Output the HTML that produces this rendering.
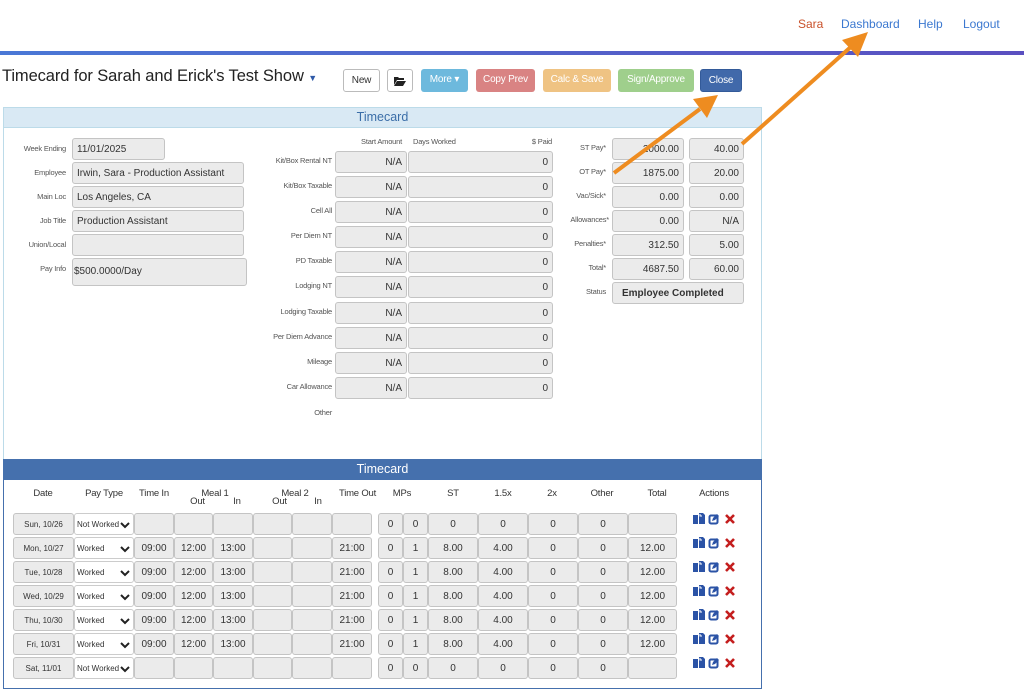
<!DOCTYPE html>
<html><head><meta charset="utf-8"><style>
*{box-sizing:border-box}
body{margin:0;width:1024px;height:684px;overflow:hidden;background:#fff;font-family:"Liberation Sans",sans-serif;color:#333;position:relative}
.a{position:absolute;white-space:nowrap}
.nav{font-size:12px;top:17px;color:#3b78d0}
.btn{position:absolute;top:69px;height:23px;border-radius:3px;font-size:10px;color:#fff;text-align:center;line-height:22px;letter-spacing:-0.2px}
.i{position:absolute;background:#ebebeb;border:1px solid #c4c4c4;border-radius:3px;font-size:10px;line-height:22px;padding:0 4px;height:22px;white-space:nowrap;overflow:hidden;color:#333}
.r{text-align:right}
.c{text-align:center;padding:0}
.l{position:absolute;font-size:7.5px;color:#555;text-align:right;white-space:nowrap;letter-spacing:-0.2px}
.h{position:absolute;font-size:9.5px;color:#333;text-align:center;white-space:nowrap;letter-spacing:-0.2px}
.sel{background:#fff;border:1px solid #ccc;font-size:8px;padding:0 2px}
.sel svg{position:absolute;right:3px;top:8px}
</style></head><body>
<svg width="0" height="0" style="position:absolute"><defs>
<g id="ic"><path d="M0 2h5v9H0z M6 0h4l2 2v9H6z" fill="#2b53a6"/><path d="M7 1v2h2" stroke="#fff" stroke-width="1" fill="none"/>
<rect x="16.5" y="2.5" width="8" height="8" rx="1.5" fill="none" stroke="#2b53a6" stroke-width="2"/><path d="M19 8l1-3 4-4 2 2-4 4z" fill="#2b53a6"/>
<path d="M33 2l8 8M41 2l-8 8" stroke="#c41e1e" stroke-width="2.6"/></g>
<path id="chev" d="M1 1l4 4 4-4" stroke="#222" stroke-width="2" fill="none"/></defs></svg>

<div class="a nav" style="left:798px;color:#c9512a">Sara</div>
<div class="a nav" style="left:841px">Dashboard</div>
<div class="a nav" style="left:918px">Help</div>
<div class="a nav" style="left:963px">Logout</div>
<div class="a" style="left:0;top:51px;width:1024px;height:4px;background:linear-gradient(90deg,#4a78d6,#5a4fc0)"></div>
<div class="a" style="left:2px;top:67px;font-size:16.5px;color:#222;letter-spacing:-0.1px">Timecard for Sarah and Erick's Test Show <span style="font-size:9px;color:#2f5aa8">▼</span></div>
<div class="btn" style="left:343px;width:37px;background:#fff;border:1px solid #bbb;color:#333">New</div>
<div class="btn" style="left:387px;width:26px;background:#fff;border:1px solid #bbb;color:#222"><svg width="12" height="10" viewBox="0 0 12 10" style="margin-top:6px"><path d="M0 1h4l1 1h5v2H3L0 9z M3 5h9l-3 5H0z" fill="#222"/></svg></div>
<div class="btn" style="left:421px;width:47px;background:#6db9dd">More ▾</div>
<div class="btn" style="left:476px;width:59px;background:#d98383">Copy Prev</div>
<div class="btn" style="left:543px;width:68px;background:#efc383">Calc &amp; Save</div>
<div class="btn" style="left:618px;width:76px;background:#9fcf8c">Sign/Approve</div>
<div class="btn" style="left:700px;width:42px;background:#4169aa;border:1px solid #335a99">Close</div>

<div class="a" style="left:3px;top:107px;width:759px;height:352px;border:1px solid #bcdbe9;border-bottom:none"></div>
<div class="a" style="left:3px;top:107px;width:759px;height:21px;background:#d9e9f4;border:1px solid #bcdbe9;color:#3b6ea8;font-size:12.5px;text-align:center;line-height:19px">Timecard</div>

<div class="l" style="left:0;width:66px;top:144px">Week Ending</div><div class="i" style="left:72px;top:138px;width:93px">11/01/2025</div>
<div class="l" style="left:0;width:66px;top:168px">Employee</div><div class="i" style="left:72px;top:162px;width:172px">Irwin, Sara - Production Assistant</div>
<div class="l" style="left:0;width:66px;top:192px">Main Loc</div><div class="i" style="left:72px;top:186px;width:172px">Los Angeles, CA</div>
<div class="l" style="left:0;width:66px;top:216px">Job Title</div><div class="i" style="left:72px;top:210px;width:172px">Production Assistant</div>
<div class="l" style="left:0;width:66px;top:240px">Union/Local</div><div class="i" style="left:72px;top:234px;width:172px"></div>
<div class="l" style="left:0;width:66px;top:264px">Pay Info</div><div class="i" style="left:72px;top:258px;width:175px;height:28px;line-height:26px;padding-left:1px">$500.0000/Day</div>

<div class="l" style="left:330px;width:72px;top:137px">Start Amount</div>
<div class="l" style="left:413px;top:137px;text-align:left">Days Worked</div>
<div class="l" style="left:500px;width:52px;top:137px">$ Paid</div>

<div class="l" style="left:240px;width:92px;top:156px">Kit/Box Rental NT</div><div class="i r" style="left:335px;top:151px;width:72px">N/A</div><div class="i r" style="left:408px;top:151px;width:145px">0</div>
<div class="l" style="left:240px;width:92px;top:181px">Kit/Box Taxable</div><div class="i r" style="left:335px;top:176px;width:72px">N/A</div><div class="i r" style="left:408px;top:176px;width:145px">0</div>
<div class="l" style="left:240px;width:92px;top:206px">Cell All</div><div class="i r" style="left:335px;top:201px;width:72px">N/A</div><div class="i r" style="left:408px;top:201px;width:145px">0</div>
<div class="l" style="left:240px;width:92px;top:231px">Per Diem NT</div><div class="i r" style="left:335px;top:226px;width:72px">N/A</div><div class="i r" style="left:408px;top:226px;width:145px">0</div>
<div class="l" style="left:240px;width:92px;top:256px">PD Taxable</div><div class="i r" style="left:335px;top:251px;width:72px">N/A</div><div class="i r" style="left:408px;top:251px;width:145px">0</div>
<div class="l" style="left:240px;width:92px;top:281px">Lodging NT</div><div class="i r" style="left:335px;top:276px;width:72px">N/A</div><div class="i r" style="left:408px;top:276px;width:145px">0</div>
<div class="l" style="left:240px;width:92px;top:307px">Lodging Taxable</div><div class="i r" style="left:335px;top:302px;width:72px">N/A</div><div class="i r" style="left:408px;top:302px;width:145px">0</div>
<div class="l" style="left:240px;width:92px;top:332px">Per Diem Advance</div><div class="i r" style="left:335px;top:327px;width:72px">N/A</div><div class="i r" style="left:408px;top:327px;width:145px">0</div>
<div class="l" style="left:240px;width:92px;top:357px">Mileage</div><div class="i r" style="left:335px;top:352px;width:72px">N/A</div><div class="i r" style="left:408px;top:352px;width:145px">0</div>
<div class="l" style="left:240px;width:92px;top:382px">Car Allowance</div><div class="i r" style="left:335px;top:377px;width:72px">N/A</div><div class="i r" style="left:408px;top:377px;width:145px">0</div>
<div class="l" style="left:240px;width:92px;top:408px">Other</div>

<div class="l" style="left:540px;width:66px;top:143px">ST Pay*</div><div class="i r" style="left:612px;top:138px;width:72px">2000.00</div><div class="i r" style="left:689px;top:138px;width:55px">40.00</div>
<div class="l" style="left:540px;width:66px;top:167px">OT Pay*</div><div class="i r" style="left:612px;top:162px;width:72px">1875.00</div><div class="i r" style="left:689px;top:162px;width:55px">20.00</div>
<div class="l" style="left:540px;width:66px;top:191px">Vac/Sick*</div><div class="i r" style="left:612px;top:186px;width:72px">0.00</div><div class="i r" style="left:689px;top:186px;width:55px">0.00</div>
<div class="l" style="left:540px;width:69px;top:215px">Allowances*</div><div class="i r" style="left:612px;top:210px;width:72px">0.00</div><div class="i r" style="left:689px;top:210px;width:55px">N/A</div>
<div class="l" style="left:540px;width:66px;top:239px">Penalties*</div><div class="i r" style="left:612px;top:234px;width:72px">312.50</div><div class="i r" style="left:689px;top:234px;width:55px">5.00</div>
<div class="l" style="left:540px;width:66px;top:263px">Total*</div><div class="i r" style="left:612px;top:258px;width:72px">4687.50</div><div class="i r" style="left:689px;top:258px;width:55px">60.00</div>
<div class="l" style="left:540px;width:66px;top:287px">Status</div><div class="i" style="left:612px;top:282px;width:132px;font-weight:bold;padding-left:9px">Employee Completed</div>

<div class="a" style="left:3px;top:459px;width:759px;height:230px;border:1px solid #4570ad"></div>
<div class="a" style="left:3px;top:459px;width:759px;height:21px;background:#4570ad;color:#fff;font-size:12.5px;text-align:center;line-height:20px">Timecard</div>

<div class="h" style="left:13px;width:60px;top:488px">Date</div>
<div class="h" style="left:74px;width:60px;top:488px">Pay Type</div>
<div class="h" style="left:134px;width:40px;top:488px">Time In</div>
<div class="h" style="left:185px;width:60px;top:488px">Meal 1</div>
<div class="h" style="left:180px;width:35px;top:496px">Out</div><div class="h" style="left:222px;width:30px;top:496px">In</div>
<div class="h" style="left:265px;width:60px;top:488px">Meal 2</div>
<div class="h" style="left:262px;width:35px;top:496px">Out</div><div class="h" style="left:303px;width:30px;top:496px">In</div>
<div class="h" style="left:332px;width:51px;top:488px">Time Out</div>
<div class="h" style="left:378px;width:48px;top:488px">MPs</div>
<div class="h" style="left:429px;width:48px;top:488px">ST</div>
<div class="h" style="left:479px;width:48px;top:488px">1.5x</div>
<div class="h" style="left:528px;width:48px;top:488px">2x</div>
<div class="h" style="left:578px;width:48px;top:488px">Other</div>
<div class="h" style="left:628px;width:58px;top:488px">Total</div>
<div class="h" style="left:690px;width:48px;top:488px">Actions</div>

<div class="i c" style="left:13px;top:513px;width:61px;font-size:8px">Sun, 10/26</div><div class="i sel" style="left:74px;top:513px;width:60px">Not Worked<svg width="10" height="7"><use href="#chev"/></svg></div><div class="i" style="left:134px;top:513px;width:40px"></div><div class="i" style="left:174px;top:513px;width:39px"></div><div class="i" style="left:213px;top:513px;width:40px"></div><div class="i" style="left:253px;top:513px;width:39px"></div><div class="i" style="left:292px;top:513px;width:40px"></div><div class="i" style="left:332px;top:513px;width:40px"></div><div class="i c" style="left:378px;top:513px;width:25px">0</div><div class="i c" style="left:403px;top:513px;width:25px">0</div><div class="i c" style="left:428px;top:513px;width:50px">0</div><div class="i c" style="left:478px;top:513px;width:50px">0</div><div class="i c" style="left:528px;top:513px;width:50px">0</div><div class="i c" style="left:578px;top:513px;width:50px">0</div><div class="i c" style="left:628px;top:513px;width:49px"></div><svg class="a" style="left:693px;top:513px" width="44" height="12"><use href="#ic"/></svg>

<div class="i c" style="left:13px;top:537px;width:61px;font-size:8px">Mon, 10/27</div><div class="i sel" style="left:74px;top:537px;width:60px">Worked<svg width="10" height="7"><use href="#chev"/></svg></div><div class="i c" style="left:134px;top:537px;width:40px">09:00</div><div class="i c" style="left:174px;top:537px;width:39px">12:00</div><div class="i c" style="left:213px;top:537px;width:40px">13:00</div><div class="i" style="left:253px;top:537px;width:39px"></div><div class="i" style="left:292px;top:537px;width:40px"></div><div class="i c" style="left:332px;top:537px;width:40px">21:00</div><div class="i c" style="left:378px;top:537px;width:25px">0</div><div class="i c" style="left:403px;top:537px;width:25px">1</div><div class="i c" style="left:428px;top:537px;width:50px">8.00</div><div class="i c" style="left:478px;top:537px;width:50px">4.00</div><div class="i c" style="left:528px;top:537px;width:50px">0</div><div class="i c" style="left:578px;top:537px;width:50px">0</div><div class="i c" style="left:628px;top:537px;width:49px">12.00</div><svg class="a" style="left:693px;top:537px" width="44" height="12"><use href="#ic"/></svg>

<div class="i c" style="left:13px;top:561px;width:61px;font-size:8px">Tue, 10/28</div><div class="i sel" style="left:74px;top:561px;width:60px">Worked<svg width="10" height="7"><use href="#chev"/></svg></div><div class="i c" style="left:134px;top:561px;width:40px">09:00</div><div class="i c" style="left:174px;top:561px;width:39px">12:00</div><div class="i c" style="left:213px;top:561px;width:40px">13:00</div><div class="i" style="left:253px;top:561px;width:39px"></div><div class="i" style="left:292px;top:561px;width:40px"></div><div class="i c" style="left:332px;top:561px;width:40px">21:00</div><div class="i c" style="left:378px;top:561px;width:25px">0</div><div class="i c" style="left:403px;top:561px;width:25px">1</div><div class="i c" style="left:428px;top:561px;width:50px">8.00</div><div class="i c" style="left:478px;top:561px;width:50px">4.00</div><div class="i c" style="left:528px;top:561px;width:50px">0</div><div class="i c" style="left:578px;top:561px;width:50px">0</div><div class="i c" style="left:628px;top:561px;width:49px">12.00</div><svg class="a" style="left:693px;top:561px" width="44" height="12"><use href="#ic"/></svg>

<div class="i c" style="left:13px;top:585px;width:61px;font-size:8px">Wed, 10/29</div><div class="i sel" style="left:74px;top:585px;width:60px">Worked<svg width="10" height="7"><use href="#chev"/></svg></div><div class="i c" style="left:134px;top:585px;width:40px">09:00</div><div class="i c" style="left:174px;top:585px;width:39px">12:00</div><div class="i c" style="left:213px;top:585px;width:40px">13:00</div><div class="i" style="left:253px;top:585px;width:39px"></div><div class="i" style="left:292px;top:585px;width:40px"></div><div class="i c" style="left:332px;top:585px;width:40px">21:00</div><div class="i c" style="left:378px;top:585px;width:25px">0</div><div class="i c" style="left:403px;top:585px;width:25px">1</div><div class="i c" style="left:428px;top:585px;width:50px">8.00</div><div class="i c" style="left:478px;top:585px;width:50px">4.00</div><div class="i c" style="left:528px;top:585px;width:50px">0</div><div class="i c" style="left:578px;top:585px;width:50px">0</div><div class="i c" style="left:628px;top:585px;width:49px">12.00</div><svg class="a" style="left:693px;top:585px" width="44" height="12"><use href="#ic"/></svg>

<div class="i c" style="left:13px;top:609px;width:61px;font-size:8px">Thu, 10/30</div><div class="i sel" style="left:74px;top:609px;width:60px">Worked<svg width="10" height="7"><use href="#chev"/></svg></div><div class="i c" style="left:134px;top:609px;width:40px">09:00</div><div class="i c" style="left:174px;top:609px;width:39px">12:00</div><div class="i c" style="left:213px;top:609px;width:40px">13:00</div><div class="i" style="left:253px;top:609px;width:39px"></div><div class="i" style="left:292px;top:609px;width:40px"></div><div class="i c" style="left:332px;top:609px;width:40px">21:00</div><div class="i c" style="left:378px;top:609px;width:25px">0</div><div class="i c" style="left:403px;top:609px;width:25px">1</div><div class="i c" style="left:428px;top:609px;width:50px">8.00</div><div class="i c" style="left:478px;top:609px;width:50px">4.00</div><div class="i c" style="left:528px;top:609px;width:50px">0</div><div class="i c" style="left:578px;top:609px;width:50px">0</div><div class="i c" style="left:628px;top:609px;width:49px">12.00</div><svg class="a" style="left:693px;top:609px" width="44" height="12"><use href="#ic"/></svg>

<div class="i c" style="left:13px;top:633px;width:61px;font-size:8px">Fri, 10/31</div><div class="i sel" style="left:74px;top:633px;width:60px">Worked<svg width="10" height="7"><use href="#chev"/></svg></div><div class="i c" style="left:134px;top:633px;width:40px">09:00</div><div class="i c" style="left:174px;top:633px;width:39px">12:00</div><div class="i c" style="left:213px;top:633px;width:40px">13:00</div><div class="i" style="left:253px;top:633px;width:39px"></div><div class="i" style="left:292px;top:633px;width:40px"></div><div class="i c" style="left:332px;top:633px;width:40px">21:00</div><div class="i c" style="left:378px;top:633px;width:25px">0</div><div class="i c" style="left:403px;top:633px;width:25px">1</div><div class="i c" style="left:428px;top:633px;width:50px">8.00</div><div class="i c" style="left:478px;top:633px;width:50px">4.00</div><div class="i c" style="left:528px;top:633px;width:50px">0</div><div class="i c" style="left:578px;top:633px;width:50px">0</div><div class="i c" style="left:628px;top:633px;width:49px">12.00</div><svg class="a" style="left:693px;top:633px" width="44" height="12"><use href="#ic"/></svg>

<div class="i c" style="left:13px;top:657px;width:61px;font-size:8px">Sat, 11/01</div><div class="i sel" style="left:74px;top:657px;width:60px">Not Worked<svg width="10" height="7"><use href="#chev"/></svg></div><div class="i" style="left:134px;top:657px;width:40px"></div><div class="i" style="left:174px;top:657px;width:39px"></div><div class="i" style="left:213px;top:657px;width:40px"></div><div class="i" style="left:253px;top:657px;width:39px"></div><div class="i" style="left:292px;top:657px;width:40px"></div><div class="i" style="left:332px;top:657px;width:40px"></div><div class="i c" style="left:378px;top:657px;width:25px">0</div><div class="i c" style="left:403px;top:657px;width:25px">0</div><div class="i c" style="left:428px;top:657px;width:50px">0</div><div class="i c" style="left:478px;top:657px;width:50px">0</div><div class="i c" style="left:528px;top:657px;width:50px">0</div><div class="i c" style="left:578px;top:657px;width:50px">0</div><div class="i c" style="left:628px;top:657px;width:49px"></div><svg class="a" style="left:693px;top:657px" width="44" height="12"><use href="#ic"/></svg>

<svg class="a" style="left:0;top:0" width="1024" height="684">
<g stroke="#ee8c20" stroke-width="4" fill="#ee8c20">
<line x1="614" y1="173" x2="700" y2="109"/>
<polygon points="718,95 693,99 707,118" stroke="none"/>
<line x1="742" y1="144" x2="853" y2="45"/>
<polygon points="868,32 842,40 858,57" stroke="none"/>
</g></svg>
</body></html>
